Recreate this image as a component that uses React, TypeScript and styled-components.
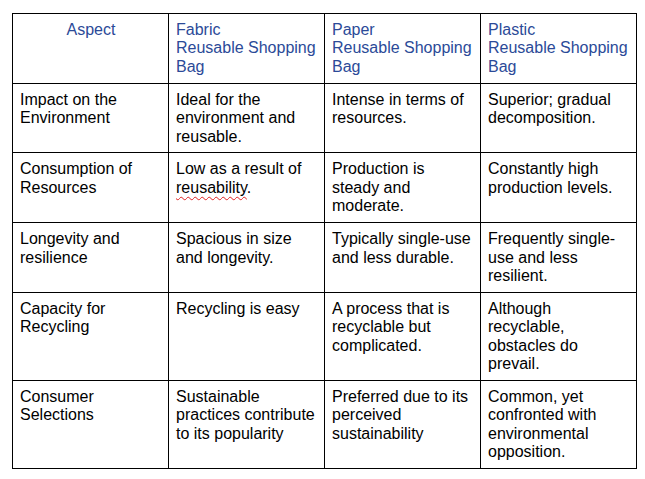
import React from "react";
import styled, { createGlobalStyle } from "styled-components";

const Global = createGlobalStyle`
  html, body { margin: 0; padding: 0; background: #ffffff; }
  body { font-family: "Liberation Sans", Arial, sans-serif; }
`;

const Page = styled.div`
  padding: 13px 0 0 12px;
`;

const Table = styled.table`
  border-collapse: collapse;
  table-layout: fixed;
  width: 625px;
  font-family: "Liberation Sans", Arial, sans-serif;
  font-size: 16px;
  line-height: 18.4px;
  color: #000000;
`;

const Col = styled.col`
  width: 156px;
`;

const HeadCell = styled.th<{ $center?: boolean }>`
  border: 1px solid #000000;
  padding: 7px 6px 6.5px 7px;
  vertical-align: top;
  font-weight: normal;
  color: #2b4a98;
  text-align: ${(p) => (p.$center ? "center" : "left")};
`;

const Cell = styled.td`
  border: 1px solid #000000;
  padding: 7px 6px 6.5px 7px;
  vertical-align: top;
  text-align: left;
`;

const Misspelled = styled.span`
  text-decoration: underline wavy #e02020;
  text-decoration-thickness: 1px;
  text-underline-offset: 3px;
`;

type Row = { aspect: string; cells: React.ReactNode[] };

const rows: Row[] = [
  {
    aspect: "Impact on the Environment",
    cells: [
      "Ideal for the environment and reusable.",
      "Intense in terms of resources.",
      "Superior; gradual decomposition.",
    ],
  },
  {
    aspect: "Consumption of Resources",
    cells: [
      <>
        Low as a result of <Misspelled>reusability</Misspelled>.
      </>,
      "Production is steady and moderate.",
      "Constantly high production levels.",
    ],
  },
  {
    aspect: "Longevity and resilience",
    cells: [
      "Spacious in size and longevity.",
      "Typically single-use and less durable.",
      "Frequently single-use and less resilient.",
    ],
  },
  {
    aspect: "Capacity for Recycling",
    cells: [
      "Recycling is easy",
      "A process that is recyclable but complicated.",
      "Although recyclable, obstacles do prevail.",
    ],
  },
  {
    aspect: "Consumer Selections",
    cells: [
      "Sustainable practices contribute to its popularity",
      "Preferred due to its perceived sustainability",
      "Common, yet confronted with environmental opposition.",
    ],
  },
];

const headers = ["Fabric", "Paper", "Plastic"];

export default function App() {
  return (
    <Page>
      <Global />
      <Table>
        <colgroup>
          <Col />
          <Col />
          <Col />
          <Col />
        </colgroup>
        <thead>
          <tr>
            <HeadCell $center>Aspect</HeadCell>
            {headers.map((h) => (
              <HeadCell key={h}>
                {h}
                <br />
                Reusable Shopping Bag
              </HeadCell>
            ))}
          </tr>
        </thead>
        <tbody>
          {rows.map((r) => (
            <tr key={r.aspect}>
              <Cell>{r.aspect}</Cell>
              {r.cells.map((c, i) => (
                <Cell key={i}>{c}</Cell>
              ))}
            </tr>
          ))}
        </tbody>
      </Table>
    </Page>
  );
}
